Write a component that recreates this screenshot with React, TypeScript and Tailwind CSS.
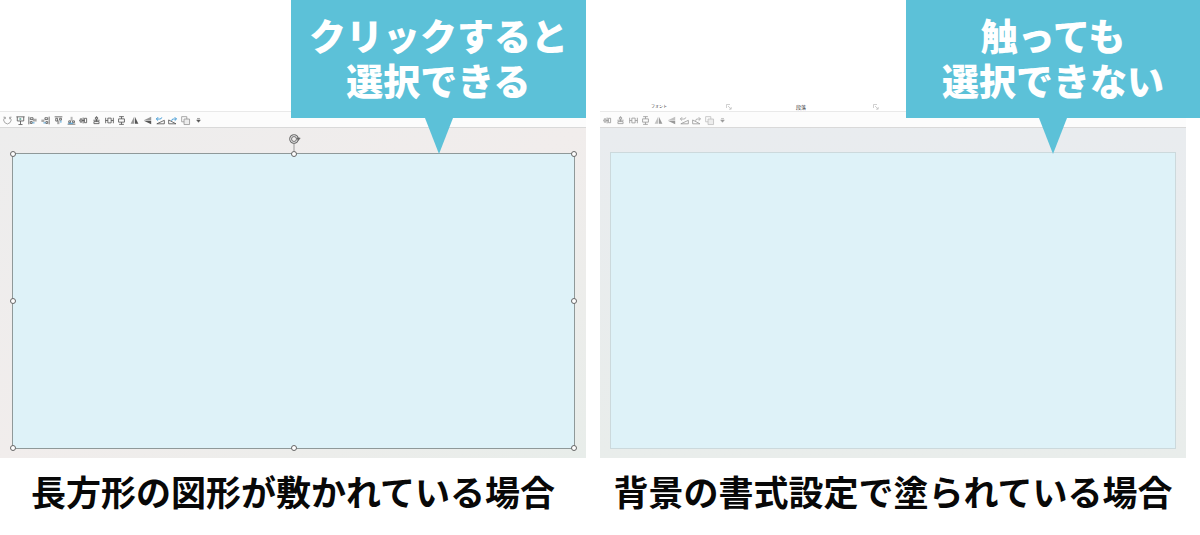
import type { ReactNode } from "react";

const stroke = { fill: "none", stroke: "currentColor", strokeWidth: 0.9 };

const icons: Record<string, ReactNode> = {
  やり直し: <path d="M3.2 2.6A4 4 0 1 0 8.6 2.6M8.4 4.6V2.4H10.4M1.6 2.4h2v2" {...stroke} />,
  スライドショー: (
    <>
      <path d="M1.5 2h9M2.5 2v4.5h7V2M6 6.5V10M3.8 10.4h4.4" {...stroke} />
      <path d="M5 3l2.4 1.3L5 5.6z" fill="#4d9a8a" />
    </>
  ),
  左揃え: (
    <>
      <path d="M2 1.8v8.4M3.6 3h3v2h-3zM3.6 7.2h2v2h-2z" {...stroke} />
      <path d="M7.2 4h3.3v3H6z" fill="currentColor" fillOpacity=".5" />
      <path d="M5.8 8.6h2.4" stroke="#3b97d3" />
    </>
  ),
  右揃え: (
    <>
      <path d="M10 1.8v8.4M5.4 3h3v2h-3zM6.4 7.2h2v2h-2z" {...stroke} />
      <path d="M1.5 5h3.3v2.6H1.5z" fill="currentColor" fillOpacity=".5" />
      <path d="M3.8 8.6h2.4" stroke="#3b97d3" />
    </>
  ),
  上揃え: (
    <>
      <path d="M1.8 2h8.4M3 3.6h2v3H3zM7.2 3.6h2v2h-2z" {...stroke} />
      <path d="M4.6 6h2.4v4H4.6z" fill="currentColor" fillOpacity=".5" />
      <path d="M8.6 6v2.4" stroke="#3b97d3" />
    </>
  ),
  下揃え: (
    <>
      <path d="M1.8 10h8.4M3 6.4h2v2H3zM7.2 6.4h2v2h-2z" {...stroke} />
      <path d="M5 2h2.2v4.4H5z" fill="currentColor" fillOpacity=".4" />
      <path d="M2.6 9h5" stroke="#3b97d3" />
    </>
  ),
  左右中央揃え: (
    <path d="M2.4 4.2v3.6h1.8V4.2zM5.6 2.8v6.4M7 3.6v4.8h2.4V3.6zM1.4 6h1M4.2 6H7" {...stroke} />
  ),
  上下中央揃え: (
    <path d="M4.8 2.6h2.4v1.8H4.8zM2.6 5.7h6.8M3.2 7.2h5.6v2.2H3.2zM6 1.4v1.2M6 4.4v2.8" {...stroke} />
  ),
  左右に整列: (
    <path d="M1.8 3v6M10.2 3v6M4.2 3.4h3.6v5.2H4.2zM1.8 6h2.4M7.8 6h2.4" {...stroke} />
  ),
  上下に整列: (
    <path d="M3.4 1.8h5.2M3.4 10.2h5.2M2.8 4.2h6.4v3.6H2.8zM6 1.8v2.4M6 7.8v2.4" {...stroke} />
  ),
  左右反転: (
    <>
      <path d="M5.6 2v7.6H1.8z" fill="currentColor" fillOpacity=".6" />
      <path d="M6.4 2v7.6h3.8z" fill="currentColor" />
    </>
  ),
  上下反転: (
    <>
      <path d="M10 5.6H2l8-3.8z" fill="currentColor" fillOpacity=".6" />
      <path d="M10 6.4H2l8 3.8z" fill="currentColor" />
    </>
  ),
  左へ回転: (
    <>
      <path d="M2 9.6h8.2V5.8z" {...stroke} />
      <path d="M1.6 4.4h3.6q2 0 2.2-1.8M3.4 2.4l-2 2 2 1.8" className="stroke-(--accent)" fill="none" />
    </>
  ),
  右へ回転: (
    <>
      <path d="M1.8 5.4v4.2h8z" {...stroke} />
      <path d="M10.2 4.4H6.8q-1.6 0-1.8 2M8.4 2.4l2 2-2 1.8" className="stroke-(--accent)" fill="none" />
    </>
  ),
  重なり順: (
    <>
      <path d="M1.8 1.8h5.6v5.6H1.8z" {...stroke} />
      <path d="M4.4 4.4h6v6h-6z" fill="#e4e4e4" stroke="currentColor" strokeWidth=".9" />
    </>
  ),
  その他: <path d="M4.4 3.8h3.2M4 5.4h4L6 8z" fill="currentColor" stroke="currentColor" strokeWidth=".6" />,
};

const allTools = Object.keys(icons);

function Toolbar({ tools, className }: { tools: string[]; className: string }) {
  return (
    <div className="h-[17px] border-t border-b border-t-[#e9e9e9] border-b-[#d9d9d9] bg-[#fcfcfc] pt-px pl-[2px]">
      <div role="toolbar" aria-label="クイックアクセス" className={`flex h-full items-center justify-between ${className}`}>
        {tools.map((name) => (
          <button key={name} type="button" aria-label={name} className={name === "重なり順" || name === "やり直し" ? "opacity-60" : ""}>
            <svg viewBox="0 0 12 12" className="block size-[11px]">
              {icons[name]}
            </svg>
          </button>
        ))}
      </div>
    </div>
  );
}

function Callout({ lines, className }: { lines: string[]; className: string }) {
  return (
    <div className={`absolute top-0 z-10 bg-[#5cc1d8] pt-[16px] text-center text-[37px] leading-[45px] font-black text-white ${className}`}>
      <p className="h-[102px]">
        {lines.map((line) => (
          <span key={line} className="block whitespace-nowrap">
            {line}
          </span>
        ))}
      </p>
      <svg viewBox="0 0 28 36" className="absolute top-full left-1/2 -ml-[14px] h-9 w-7">
        <path d="M0 0h28L14 36z" fill="#5cc1d8" />
      </svg>
    </div>
  );
}

const handles = [
  "left-0 top-0",
  "left-1/2 top-0",
  "left-full top-0",
  "left-0 top-1/2",
  "left-full top-1/2",
  "left-0 top-full",
  "left-1/2 top-full",
  "left-full top-full",
];

function SelectedShape() {
  return (
    <div className="relative aspect-[563/296] border border-[#8f9999] bg-[#def2f8]">
      {handles.map((place) => (
        <span key={place} className={`absolute size-[6px] -translate-1/2 rounded-full border border-[#666] bg-white ${place}`} />
      ))}
      <svg viewBox="0 0 14 20" className="absolute bottom-full left-1/2 -ml-[7px] h-5 w-[14px]" fill="none" stroke="#666">
        <path d="M7 9v8" stroke="#999" />
        <circle cx="7" cy="5" r="3.4" strokeWidth="2.8" />
        <circle cx="7" cy="5" r="3.4" stroke="#eee" strokeWidth="1" />
        <path d="M9.8 4h3.4l-1.8 2.4z" fill="#666" strokeWidth=".6" />
      </svg>
    </div>
  );
}

function Launcher() {
  return (
    <button type="button" aria-label="詳細設定">
      <svg viewBox="0 0 6 6" className="block size-[6px]" fill="none" stroke="#bbb" strokeWidth=".7">
        <path d="M.5 4V.5H4M2 2l3 3M5.2 3v2.2H3" />
      </svg>
    </button>
  );
}

function Caption({ children }: { children: ReactNode }) {
  return <figcaption className="pt-[10px] text-center text-[35px] leading-[52px] font-bold whitespace-nowrap text-[#080808]">{children}</figcaption>;
}

export default function App() {
  return (
    <main className="grid grid-cols-2 gap-[14px] overflow-hidden bg-white pr-[14px] pb-[15px] font-['Liberation_Sans','Noto_Sans_CJK_JP',sans-serif]">
      <figure className="relative min-w-0">
        <Callout lines={["クリックすると", "選択できる"]} className="right-0 w-[295px]" />
        <div className="h-[111px]" />
        <div className="text-[#555] [--accent:#3b97d3]">
          <Toolbar tools={allTools} className="w-[202px]" />
        </div>
        <div className="bg-linear-to-br from-[#ededed] via-[#f1edec] to-[#e8edea] pt-[25px] pr-[11px] pb-[9px] pl-[12px]">
          <SelectedShape />
        </div>
        <Caption>長方形の図形が敷かれている場合</Caption>
      </figure>

      <figure className="relative min-w-0">
        <Callout lines={["触っても", "選択できない"]} className="-right-[14px] w-[294px]" />
        <div className="flex h-[111px] items-end pb-px text-[4px] leading-[6px] text-[#333]">
          <div className="flex w-[132px] items-center justify-between pl-[51px]">
            <span>フォント</span>
            <Launcher />
          </div>
          <div className="flex w-[147px] items-center justify-between pl-[64px]">
            <span className="text-[5px]">段落</span>
            <Launcher />
          </div>
        </div>
        <div className="text-[#999] [--accent:#aaa]">
          <Toolbar tools={allTools.slice(6)} className="w-[126px]" />
        </div>
        <div className="bg-linear-to-b from-[#e9ecef] to-[#e9edeb] px-[10px] pt-[24px] pb-[9px]">
          <div className="aspect-[566/297] border border-[#ccd9dc] bg-[#def2f8]" />
        </div>
        <Caption>背景の書式設定で塗られている場合</Caption>
      </figure>
    </main>
  );
}
